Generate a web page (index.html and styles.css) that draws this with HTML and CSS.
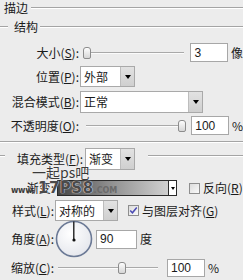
FILE: index.html
```html
<!DOCTYPE html>
<html><head><meta charset="utf-8"><link rel="stylesheet" href="styles.css"></head>
<body>
<div class="panel">
  <div class="title"><span class="title-text">描边</span><span class="groove"></span></div>
  <div class="legend"><span class="groove stub"></span><span class="legend-text">结构</span><span class="groove"></span></div>

  <div class="row r-size">
    <span class="lbl w79">大小(<u>S</u>):</span>
    <div class="slider s-size"><span class="thumb"></span><span class="track"></span></div>
    <div class="input i-size">3</div><span class="unit">像</span>
  </div>

  <div class="row r-pos">
    <span class="lbl w79">位置(<u>P</u>):</span>
    <div class="select sel-pos"><span class="sel-text">外部</span><span class="sel-btn"><i class="tri"></i></span></div>
  </div>

  <div class="row r-blend">
    <span class="lbl w79">混合模式(<u>B</u>):</span>
    <div class="select sel-blend"><span class="sel-text">正常</span><span class="sel-btn"><i class="tri"></i></span></div>
  </div>

  <div class="row r-opac">
    <span class="lbl w79">不透明度(<u>O</u>):</span>
    <div class="slider s-opac"><span class="track"></span><span class="thumb"></span></div>
    <div class="input i-opac">100</div><span class="unit">%</span>
  </div>

  <div class="divider groove"></div>

  <div class="row r-fill">
    <span class="groove stub2"></span>
    <span class="lbl fill-lbl">填充类型(<u>F</u>):</span>
    <div class="select sel-fill"><span class="sel-text">渐变</span><span class="sel-btn"><i class="tri"></i></span></div>
    <span class="groove fill-line"></span>
  </div>

  <div class="row r-grad">
    <span class="lbl w54">渐变:</span>
    <div class="grad"><span class="grad-fill"></span><span class="grad-btn"><i class="tri"></i></span></div>
    <span class="check c-rev"></span><span class="ctext">反向(<u>R</u>)</span>
  </div>

  <div class="row r-style">
    <span class="lbl w54">样式(<u>L</u>):</span>
    <div class="select sel-style"><span class="sel-text">对称的</span><span class="sel-btn"><i class="tri"></i></span></div>
    <span class="check checked c-align"><svg viewBox="0 0 11 11" width="9" height="9"><path d="M1.5 5.5 L4.2 8.3 L9.5 1.8" fill="none" stroke="#4a4ab4" stroke-width="1.8"/></svg></span><span class="ctext">与图层对齐(<u>G</u>)</span>
  </div>

  <div class="row r-angle">
    <span class="lbl w54">角度(<u>A</u>):</span>
    <svg class="dial" viewBox="0 0 38 38" width="38" height="38">
      <defs><radialGradient id="dg" cx="0.4" cy="0.35" r="0.7"><stop offset="0" stop-color="#ffffff"/><stop offset="1" stop-color="#e4e6ec"/></radialGradient></defs>
      <circle cx="19" cy="19" r="17.5" fill="url(#dg)" stroke="#6c7a96" stroke-width="1.6"/>
      <line x1="18.8" y1="19.5" x2="18.8" y2="1.5" stroke="#111" stroke-width="1.3"/>
      <circle cx="19" cy="20" r="1.6" fill="#111"/>
    </svg>
    <div class="input i-angle">90</div><span class="unit">度</span>
  </div>

  <div class="row r-scale">
    <span class="lbl w54">缩放(<u>C</u>):</span>
    <div class="slider s-scale"><span class="track t-left"></span><span class="thumb"></span><span class="track"></span></div>
    <div class="input i-scale">100</div><span class="unit">%</span>
  </div>

  <div class="watermark">
    <div class="wm1">一起ps吧</div>
    <div class="wm2"><span class="wm-www">www.</span><span class="wm-num">17PS8</span><span class="wm-com">.COM</span></div>
  </div>
</div>
</body></html>
```
FILE: styles.css
```css
* { box-sizing: border-box; }
body {
  margin: 0;
  background: #ececec;
  font-family: "Noto Sans CJK SC", "Liberation Sans", sans-serif;
  font-size: 12px;
  line-height: 1;
  color: #1a1a1a;
  width: 243px;
  height: 280px;
  overflow: hidden;
}
u { text-decoration: underline; text-underline-offset: 1px; }
.panel { position: relative; width: 243px; height: 280px; }

.groove {
  flex: 1;
  height: 2px;
  border-top: 1px solid #a4a4a4;
  border-bottom: 1px solid #ffffff;
}
.title { height: 16px; display: flex; align-items: center; }
.title-text { padding-left: 4px; margin-right: 3px; }
.legend { margin-top: 3px; height: 16px; display: flex; align-items: center; }
.stub { flex: none; width: 8px; }
.legend-text { margin: 0 2px 0 6px; }

.row { display: flex; align-items: center; }
.lbl { flex: none; text-align: right; white-space: nowrap; }
.w79 { width: 79px; }
.w54 { width: 54px; }
.unit { margin-left: 3px; }

.r-size { margin-top: 8px; height: 19px; }
.r-pos { margin-top: 4px; height: 21px; }
.r-blend { margin-top: 4px; height: 22px; }
.r-opac { margin-top: 3px; height: 19px; }
.divider { margin-top: 6px; width: 243px; flex: none; }
.r-fill { margin-top: 5px; height: 22px; align-items: stretch; }
.r-grad { margin-top: 10px; height: 16px; }
.r-style { margin-top: 4px; height: 21px; }
.r-angle { margin-top: -1px; height: 38px; }
.r-scale { margin-top: 1px; height: 18px; }

/* sliders */
.slider { display: flex; align-items: center; height: 14px; }
.track {
  flex: 1;
  height: 2px;
  border-top: 1px solid #a9a9a9;
  border-bottom: 1px solid #fbfbfb;
}
.thumb {
  flex: none;
  width: 8px;
  height: 12px;
  border: 1px solid #8c8c8c;
  border-radius: 3px 3px 2px 2px;
  background: linear-gradient(#fdfdfd, #d6d6d6);
}
.s-size { margin-left: 4px; width: 103px; }
.s-opac { margin-left: 7px; width: 101px; }
.s-scale { margin-left: 4px; width: 100px; }
.t-left { flex: none; width: 60px; }

/* inputs */
.input {
  height: 19px;
  background: #fff;
  border: 1px solid #a7a7a7;
  padding-left: 3px;
  display: flex;
  align-items: center;
  font-family: "Liberation Sans", sans-serif;
  font-size: 12px;
}
.i-size { margin-left: 6px; width: 38px; }
.i-opac { margin-left: 5px; width: 38px; }
.i-angle { margin-left: 3px; width: 41px; }
.i-scale { margin-left: 9px; width: 38px; height: 18px; }

/* selects */
.select {
  display: flex;
  height: 100%;
  background: #fff;
  border: 1px solid #a9a9a9;
}
.sel-text { flex: 1; display: flex; align-items: center; padding-left: 3px; white-space: nowrap; }
.sel-btn {
  flex: none;
  width: 14px;
  background: linear-gradient(#e2e2e2, #cfcfcf);
  border-left: 1px solid #bdbdbd;
  display: flex;
  align-items: center;
  justify-content: center;
}
.tri {
  display: block;
  width: 0; height: 0;
  border-left: 3.5px solid transparent;
  border-right: 3.5px solid transparent;
  border-top: 4px solid #000;
}
.sel-pos { margin-left: 1px; width: 55px; }
.sel-blend { margin-left: 1px; width: 123px; }
.sel-fill { margin-left: 2px; width: 50px; }
.sel-style { margin-left: 1px; width: 63px; }

.stub2 { flex: none; width: 5px; margin-top: 7px; align-self: flex-start; }
.fill-lbl { margin-left: 12px; display: flex; align-items: center; }
.fill-line { margin-left: 13px; margin-top: 7px; align-self: flex-start; }

/* gradient */
.grad {
  margin-left: 3px;
  width: 120px;
  height: 16px;
  display: flex;
  border: 1px solid #2a2a2a;
  background: #fff;
}
.grad-fill { flex: 1; background: linear-gradient(to right, #454545, #8c8c8c 45%, #d0d0d0); }
.grad-btn {
  flex: none;
  width: 8px;
  border-left: 1px solid #2a2a2a;
  background: #fff;
  display: flex;
  align-items: center;
  justify-content: center;
}
.grad-btn .tri { border-left-width: 2.5px; border-right-width: 2.5px; border-top-width: 3px; }

/* checkboxes */
.check {
  flex: none;
  width: 11px;
  height: 11px;
  border: 1px solid #8e8e8e;
  background: linear-gradient(135deg, #dcdcdc, #fafafa);
  display: flex;
  align-items: center;
  justify-content: center;
}
.c-rev { margin-left: 12px; }
.c-align { margin-left: 10px; }
.ctext { margin-left: 3px; white-space: nowrap; }

.dial { flex: none; margin-left: 1px; }

/* watermark overlay */
.watermark {
  position: absolute;
  left: 11px;
  top: 165px;
  pointer-events: none;
}
.wm1 {
  padding-left: 21px;
  font-size: 14px;
  line-height: 14px;
  color: #3a3a3a;
  text-shadow: 0 0 1px #fff;
}
.wm2 {
  display: flex;
  align-items: baseline;
  margin-top: 2px;
  font-family: "DejaVu Sans", sans-serif;
  font-weight: bold;
}
.wm-www { font-size: 8px; color: #3a3a3a; letter-spacing: -0.3px; width: 27px; }
.wm-num { font-size: 15px; color: #4a4a4a; letter-spacing: 0.5px; text-shadow: 0 0 1px #fff, 0 0 1px #fff; }
.wm-com { font-size: 8px; color: #6a6a6a; }
```
